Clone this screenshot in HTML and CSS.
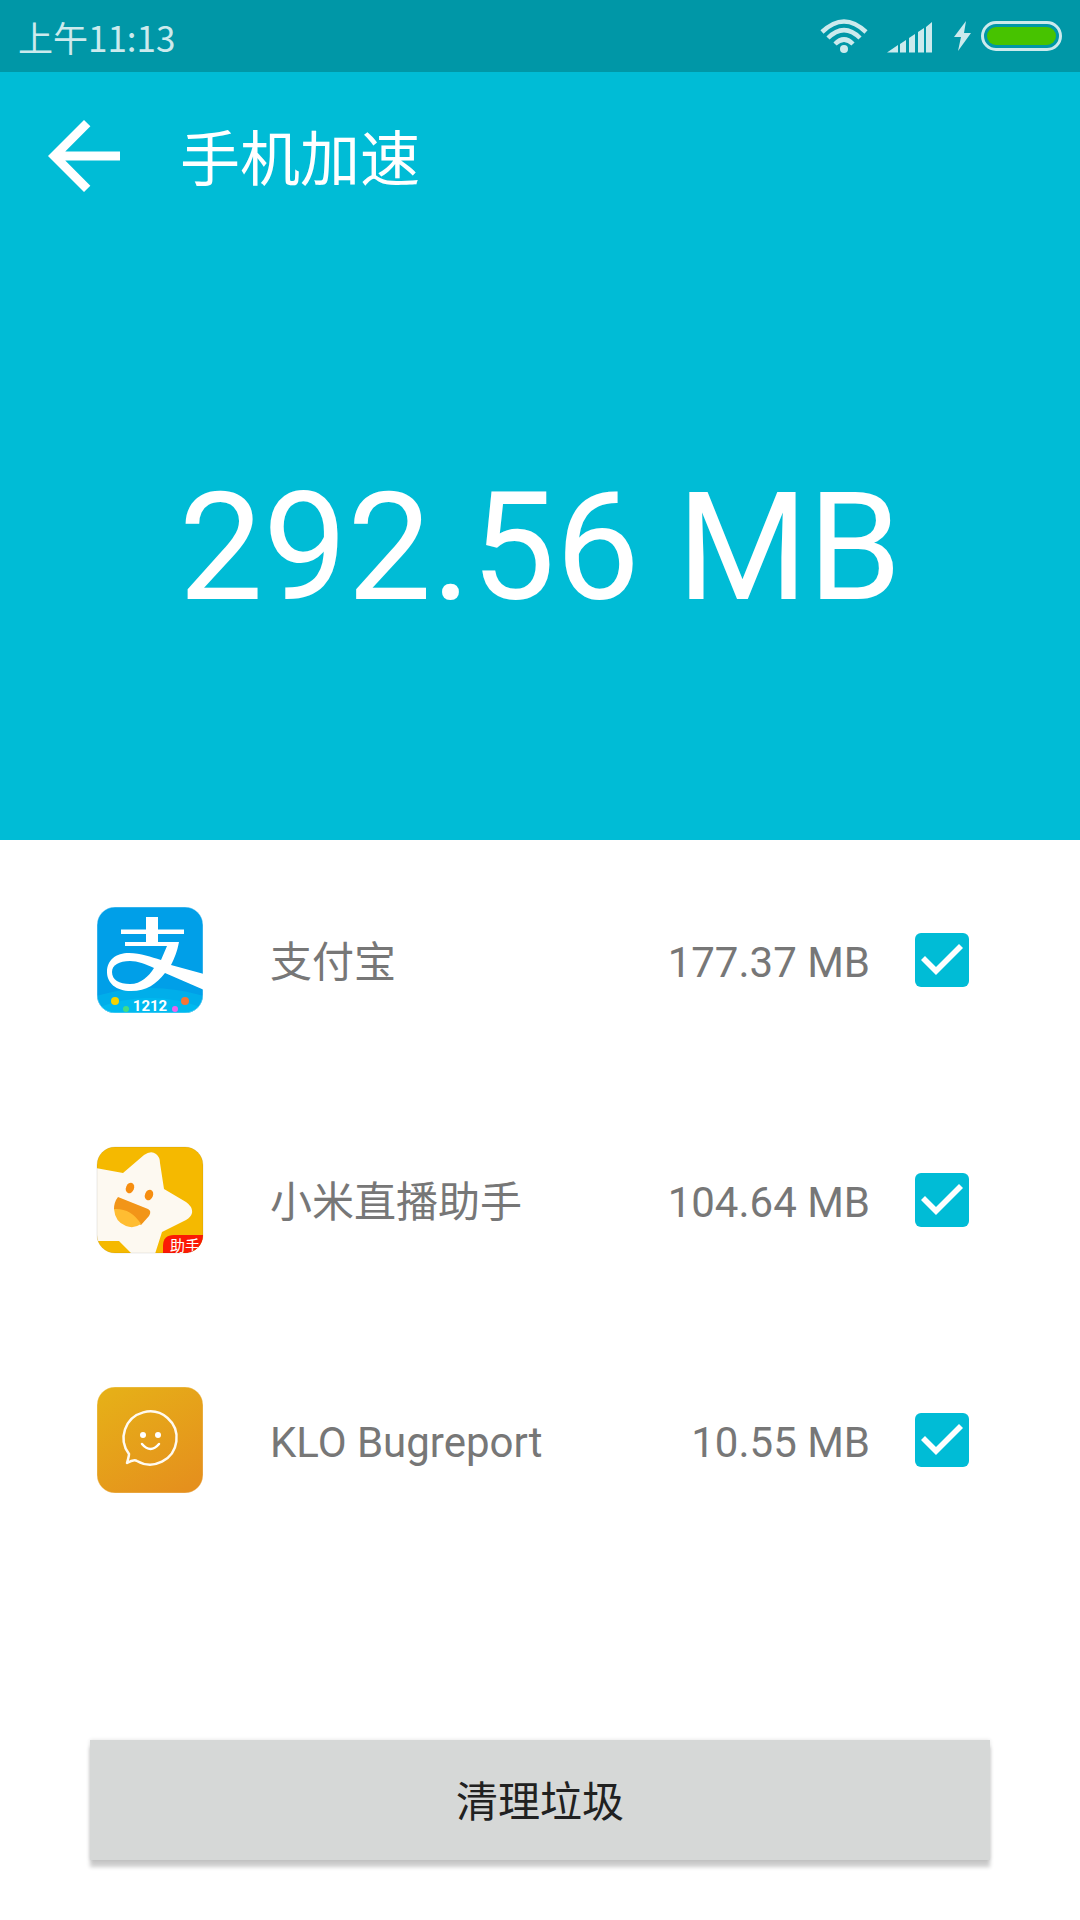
FILE: index.html
```html
<!DOCTYPE html>
<html lang="zh-CN">
<head>
<meta charset="utf-8">
<meta name="viewport" content="width=device-width, initial-scale=1">
<title>手机加速</title>
<link rel="stylesheet" href="styles.css">
</head>
<body>
<div class="screen">
  <div class="status">
    <span class="time">上午11:13</span>
    <svg class="signals" viewBox="0 0 244 36" aria-hidden="true">
      <g fill="none" stroke="#cceaed" stroke-width="4.500">
        <path d="M2 14Q24 -7 46 14"/>
        <path d="M8 20Q24 4 40 20"/>
        <path d="M15 26Q24 17 33 26"/>
      </g>
      <g fill="#cceaed">
        <circle cx="24" cy="31" r="4"/>
        <path d="M67 34.500L78 27v7.500zM80 26l6-4v12.500h-6zM89 20l6-4v18.500h-6zM98 14l6-4v24.500h-6zM106 9l6-5v30.500h-6z"/>
        <path d="M146 3L134 19h7l-3 14 13-18h-7z"/>
      </g>
      <rect x="162.500" y="4.500" width="78" height="27" rx="13.500" fill="none" stroke="#cceaed" stroke-width="3"/>
      <rect x="167" y="9" width="69" height="18" rx="9" fill="#47c300"/>
    </svg>
  </div>
  <header class="hero">
    <div class="toolbar">
      <button class="back" type="button" aria-label="返回">
        <svg viewBox="0 0 24 24" aria-hidden="true"><path fill="#fff" d="M20 11H7.830l5.590-5.590L12 4l-8 8 8 8 1.410-1.410L7.830 13H20z"/></svg>
      </button>
      <h1 class="title">手机加速</h1>
    </div>
    <p class="total">292.56 MB</p>
  </header>
  <main class="content">
    <ul class="apps">
      <li>
        <label class="app">
          <svg class="icon" viewBox="0 0 108 108" aria-hidden="true">
            <defs><clipPath id="tile"><rect x="1" y="1" width="106" height="106" rx="18"/></clipPath></defs>
            <g clip-path="url(#tile)">
              <rect width="108" height="108" fill="#009fe8"/>
              <path fill="#00aeea" d="M0 90Q54 74 108 90V108H0z"/>
              <path fill="#00b9ef" d="M0 102Q54 82 108 102V108H0z"/>
              <path fill="#fff" d="M50 11h12v12.500h26v4.500h-26v8h21C81 46 79 51 75 59L108 68V84L69 67C60 78 51 85 35 85C20 85 11 77 11 66C11 54 20 47 33 47C45 47 55 51 65 54L71 40H29v-4h21v-8H25v-4.500h25z"/>
              <path fill="#009fe8" d="M58 62C49 58 42 55 34 55C23 55 16 59 16 66C16 74 23 78 34 78C45 78 53 70 58 62z"/>
              <circle cx="19" cy="95" r="4" fill="#f4d400"/>
              <circle cx="30" cy="103" r="3" fill="#43dc84"/>
              <circle cx="79" cy="103" r="3" fill="#ef63ed"/>
              <circle cx="89" cy="95" r="4" fill="#f47538"/>
              <text class="badge-year" x="54" y="105" text-anchor="middle">1212</text>
            </g>
            <rect x="1" y="1" width="106" height="106" rx="18" fill="none" stroke="#fff" stroke-opacity=".4"/>
          </svg>
          <span class="name">支付宝</span>
          <span class="size">177.37 MB</span>
          <input class="check" type="checkbox" checked>
        </label>
      </li>
      <li>
        <label class="app">
          <svg class="icon" viewBox="0 0 108 108" aria-hidden="true">
            <g clip-path="url(#tile)">
              <rect width="108" height="108" fill="#f5b900"/>
              <path fill="#fdf9f1" d="M0 22L27 27L48 9Q55 4 60 8Q64 11 64 17L68 43L90 56Q97 61 96 67Q95 71 90 74L66 86L59 108H35V107L23 95H0z"/>
              <ellipse cx="34" cy="42" rx="4" ry="5.500" transform="rotate(22 34 42)" fill="#f68e10"/>
              <ellipse cx="53" cy="49" rx="4" ry="5.500" transform="rotate(22 53 49)" fill="#f68e10"/>
              <path fill="#f29518" d="M22 51L52 63Q56 65 53 70L45 79L32 69L18 63Q18 56 22 51z"/>
              <path fill="#ffbd32" d="M18 63Q35 62 45 78Q38 83 30 80Q19 76 18 63z"/>
              <path fill="#fb1a05" d="M67 108V100Q67 89 78 89H108V108z"/>
              <text class="badge-helper" x="89" y="105" text-anchor="middle">助手</text>
            </g>
            <rect x="1" y="1" width="106" height="106" rx="18" fill="none" stroke="#000" stroke-opacity=".08"/>
          </svg>
          <span class="name">小米直播助手</span>
          <span class="size">104.64 MB</span>
          <input class="check" type="checkbox" checked>
        </label>
      </li>
      <li>
        <label class="app">
          <svg class="icon" viewBox="0 0 108 108" aria-hidden="true">
            <defs><linearGradient id="amber" x1=".2" y1="0" x2=".8" y2="1"><stop stop-color="#e6af18"/><stop offset="1" stop-color="#e5901d"/></linearGradient></defs>
            <rect x="1" y="1" width="106" height="106" rx="18" fill="url(#amber)" stroke="#fff" stroke-opacity=".3"/>
            <path fill="none" stroke="#fffaf0" stroke-width="2.500" stroke-linejoin="round" d="M33 68A26.500 26.500 0 1 1 41 75Q38 73 31 77Q33 70 33 68z"/>
            <circle cx="47" cy="49" r="3" fill="#fff"/>
            <circle cx="62" cy="49" r="3" fill="#fff"/>
            <path fill="none" stroke="#fff" stroke-width="2.500" stroke-linecap="round" d="M46 58Q54.500 68 63 58"/>
          </svg>
          <span class="name">KLO Bugreport</span>
          <span class="size">10.55 MB</span>
          <input class="check" type="checkbox" checked>
        </label>
      </li>
    </ul>
    <button class="clean" type="button">清理垃圾</button>
  </main>
</div>
</body>
</html>
```
FILE: styles.css
```css
* {
  box-sizing: border-box;
}

body {
  margin: 0;
  background: #fff;
  font-family: Roboto, "Noto Sans CJK SC", sans-serif;
}

.screen {
  display: flex;
  flex-direction: column;
  min-height: 100vh;
}

.status {
  display: flex;
  align-items: center;
  justify-content: space-between;
  height: 72px;
  padding: 0 16px 0 18px;
  background: #0097a7;
}

.time {
  padding-top: 2px;
  color: #cceaed;
  font-family: "Noto Sans CJK SC", sans-serif;
  font-size: 35px;
  line-height: 70px;
}

.signals {
  width: 244px;
  height: 36px;
}

.hero {
  display: flex;
  flex-direction: column;
  height: 768px;
  background: #00bcd6;
  color: #fff;
}

.toolbar {
  display: flex;
  align-items: center;
  gap: 42px;
  height: 168px;
  padding: 0 30px;
}

.back {
  width: 108px;
  height: 108px;
  padding: 0;
  border: 0;
  background: none;
}

.back svg,
.icon {
  display: block;
  width: 108px;
  height: 108px;
}

.title {
  margin: 0;
  padding-top: 10px;
  font-size: 60px;
  font-weight: 400;
  line-height: 84px;
}

.total {
  display: flex;
  flex: 1;
  align-items: center;
  justify-content: center;
  margin: 0;
  padding-top: 16px;
  font-size: 150px;
  line-height: 176px;
}

.content {
  display: flex;
  flex: 1;
  flex-direction: column;
  justify-content: space-between;
}

.apps {
  margin: 0;
  padding: 0;
  list-style: none;
}

.app {
  display: flex;
  align-items: center;
  height: 240px;
  padding: 0 111px 0 96px;
  color: #777;
  font-size: 42px;
  line-height: 60px;
}

.name {
  flex: 1;
  margin-left: 66px;
  padding-top: 6px;
}

.size {
  margin-right: 45px;
  padding-top: 6px;
}

.check {
  width: 54px;
  height: 54px;
  margin: 0;
  border-radius: 6px;
  appearance: none;
  background: #00bcd6;
}

.check:checked::before {
  display: block;
  width: 54px;
  height: 54px;
  background: #fff;
  clip-path: polygon(21px 42px, 6px 27px, 10px 23px, 21px 34px, 44px 11px, 48px 15px);
  content: "";
}

.badge-year {
  fill: #fff;
  font: 700 15px Roboto, sans-serif;
}

.badge-helper {
  fill: #fff;
  font: 15px "Noto Sans CJK SC", sans-serif;
}

.clean {
  height: 120px;
  margin: 0 90px 60px;
  padding: 6px 0 0;
  border: 0;
  background: #d6d8d7;
  box-shadow: 0 7px 4px rgba(0, 0, 0, 0.2), 0 0 4px rgba(0, 0, 0, 0.12);
  color: #212121;
  font: 42px/60px Roboto, "Noto Sans CJK SC", sans-serif;
}
```
